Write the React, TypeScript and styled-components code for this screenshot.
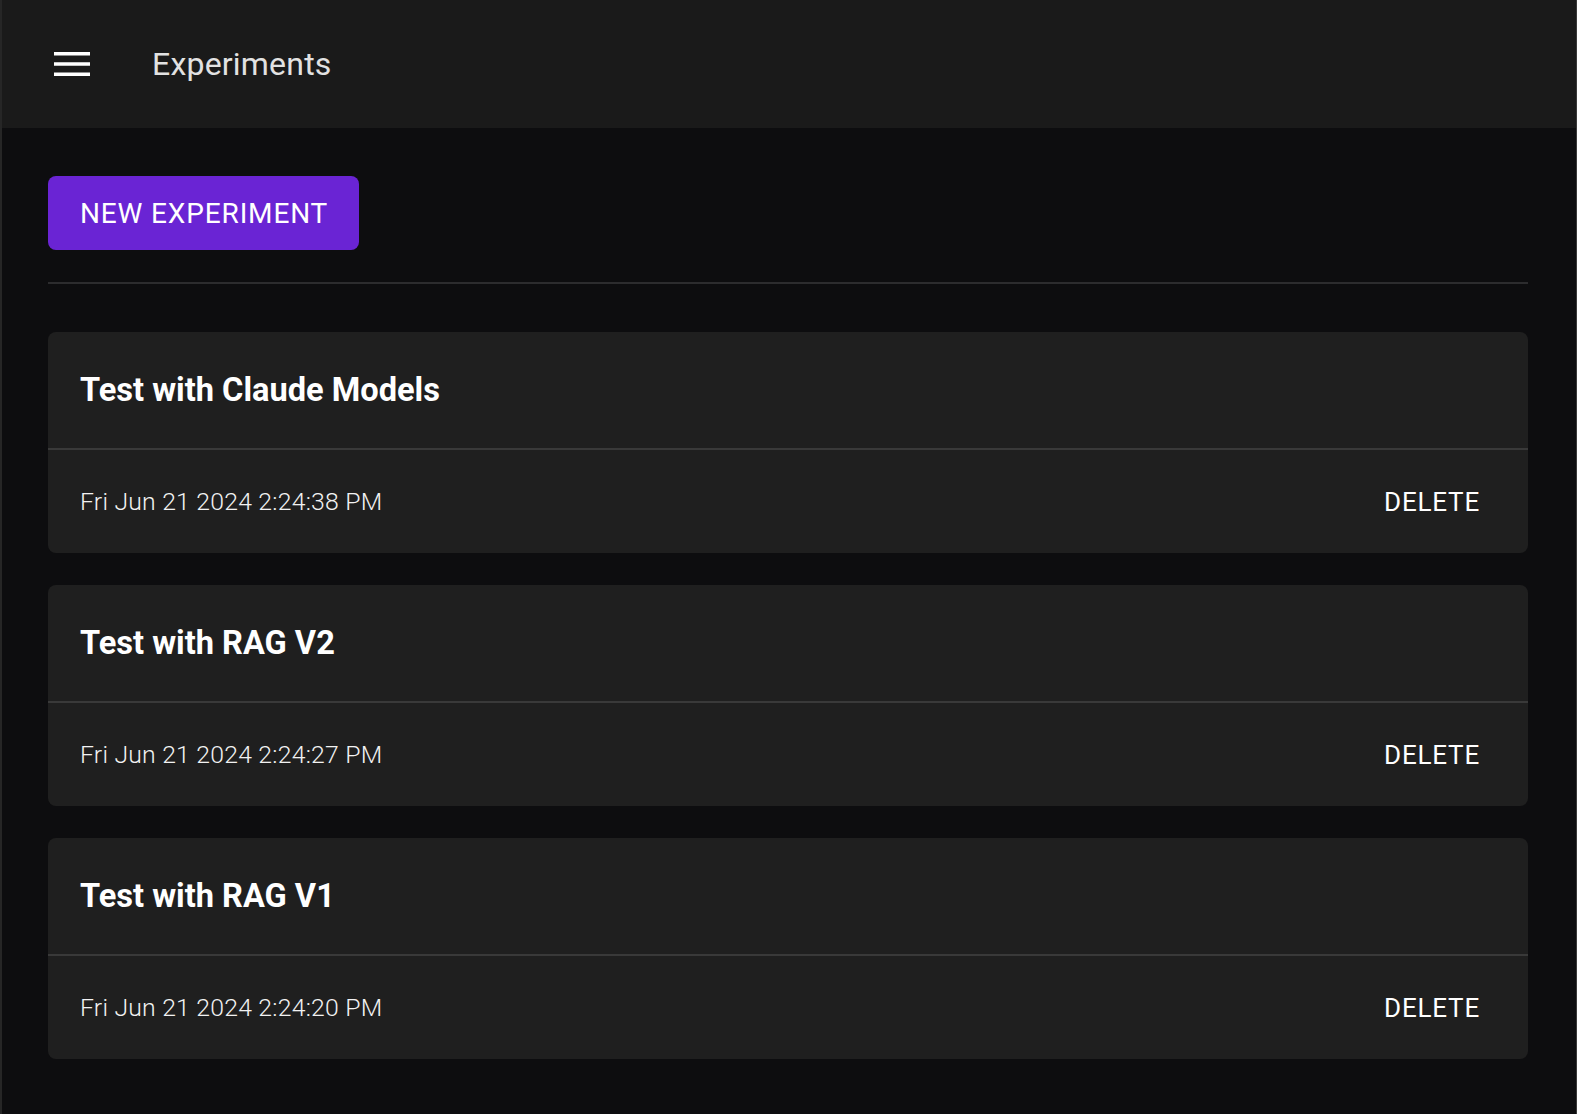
import React from "react";
import styled, { createGlobalStyle } from "styled-components";

const GlobalStyle = createGlobalStyle`
  html, body {
    margin: 0;
    padding: 0;
    background: #0d0d0f;
    font-family: Roboto, "Liberation Sans", Arial, sans-serif;
    -webkit-font-smoothing: antialiased;
  }
  #root {
    min-height: 100vh;
  }
`;

const Frame = styled.div`
  min-height: 100vh;
  box-sizing: border-box;
  background: #0d0d0f;
  border-left: 2px solid #262626;
  border-right: 1px solid #3a3a3a;
`;

const Header = styled.header`
  height: 128px;
  background: #1a1a1a;
  display: flex;
  align-items: center;
  padding-left: 46px;
  gap: 56px;
`;

const MenuButton = styled.button`
  width: 48px;
  height: 48px;
  padding: 0;
  border: none;
  background: transparent;
  color: #ffffff;
  display: flex;
  align-items: center;
  justify-content: center;
  cursor: pointer;
`;

const Title = styled.h1`
  margin: 0;
  font-size: 32px;
  font-weight: 400;
  color: #e2e2e2;
  letter-spacing: 0.2px;
`;

const Main = styled.main`
  padding: 48px 48px 56px 46px;
  display: flex;
  flex-direction: column;
`;

const PrimaryButton = styled.button`
  align-self: flex-start;
  height: 74px;
  width: 311px;
  padding: 0 32px;
  border: none;
  border-radius: 8px;
  background: #6a24d4;
  color: #ffffff;
  font-family: Roboto, "Liberation Sans", Arial, sans-serif;
  font-size: 28px;
  font-weight: 400;
  letter-spacing: 0.85px;
  text-transform: uppercase;
  text-align: left;
  white-space: nowrap;
  cursor: pointer;
`;

const Rule = styled.hr`
  margin: 32px 0 48px;
  border: none;
  height: 2px;
  background: #2c2c2e;
`;

const List = styled.div`
  display: flex;
  flex-direction: column;
  gap: 32px;
`;

const Card = styled.article`
  background: #1f1f1f;
  border-radius: 8px;
  overflow: hidden;
`;

const CardHead = styled.div`
  height: 116px;
  padding: 0 32px;
  display: flex;
  align-items: center;
  border-bottom: 2px solid #393939;
`;

const CardTitle = styled.h2`
  margin: 0;
  font-size: 32.6px;
  font-weight: 700;
  color: #ffffff;
`;

const CardFoot = styled.div`
  height: 103px;
  padding: 0 48px 0 32px;
  display: flex;
  align-items: center;
  justify-content: space-between;
`;

const DateText = styled.span`
  font-family: "Roboto Light", Roboto, "Liberation Sans", Arial, sans-serif;
  font-size: 24.8px;
  font-weight: 300;
  color: #f2f2f2;
  letter-spacing: 0.2px;
`;

const TextButton = styled.button`
  padding: 0;
  border: none;
  background: transparent;
  color: #ffffff;
  font-family: Roboto, "Liberation Sans", Arial, sans-serif;
  font-size: 26px;
  font-weight: 400;
  letter-spacing: 0.8px;
  text-transform: uppercase;
  cursor: pointer;
`;

const experiments = [
  { title: "Test with Claude Models", date: "Fri Jun 21 2024 2:24:38 PM" },
  { title: "Test with RAG V2", date: "Fri Jun 21 2024 2:24:27 PM" },
  { title: "Test with RAG V1", date: "Fri Jun 21 2024 2:24:20 PM" },
];

export default function App() {
  return (
    <>
      <GlobalStyle />
      <Frame>
        <Header>
          <MenuButton aria-label="menu">
            <svg width="48" height="48" viewBox="0 0 24 24" fill="currentColor">
              <path d="M3 18h18v-1.7H3zm0-5.15h18v-1.7H3zM3 6v1.7h18V6z" />
            </svg>
          </MenuButton>
          <Title>Experiments</Title>
        </Header>
        <Main>
          <PrimaryButton>New Experiment</PrimaryButton>
          <Rule />
          <List>
            {experiments.map((e) => (
              <Card key={e.title}>
                <CardHead>
                  <CardTitle>{e.title}</CardTitle>
                </CardHead>
                <CardFoot>
                  <DateText>{e.date}</DateText>
                  <TextButton>Delete</TextButton>
                </CardFoot>
              </Card>
            ))}
          </List>
        </Main>
      </Frame>
    </>
  );
}
